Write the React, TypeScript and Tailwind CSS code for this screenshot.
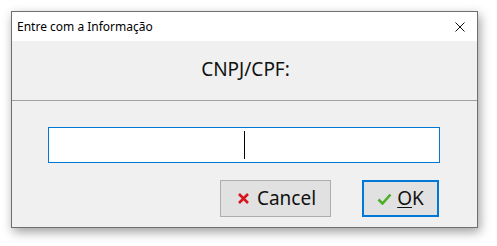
/* "Entre com a Informação" — a Windows-style input dialog asking for CNPJ/CPF */

function CloseIcon() {
  return (
    <svg viewBox="0 0 10 10" className="size-[10px]" fill="none" stroke="#111" strokeWidth="1" aria-hidden="true">
      <path d="M0.5 0.5L9.5 9.5M9.5 0.5L0.5 9.5" />
    </svg>
  );
}

/* bold red cross on the Cancel button */
function CrossIcon() {
  return (
    <svg viewBox="0 0 13 11" className="h-[11px] w-[13px]" fill="none" stroke="#d9141b" strokeWidth="2.6" aria-hidden="true">
      <path d="M2 1L11 10M11 1L2 10" />
    </svg>
  );
}

/* green tick on the OK button */
function CheckIcon() {
  return (
    <svg viewBox="0 0 15 12" className="h-[12px] w-[15px]" fill="none" stroke="#4caf28" strokeWidth="2.6" aria-hidden="true">
      <path d="M1.5 6.5L5.5 10.5L13.5 1.5" />
    </svg>
  );
}

export default function App() {
  return (
    <div className="h-[246px] w-[497px] bg-white pl-[11px] pt-[11px] font-['Noto_Sans',sans-serif]">
      <div className="flex h-[217px] w-[467px] flex-col border border-[#6f6f6f] bg-[#f0f0f0] shadow-[2px_4px_10px_rgba(0,0,0,0.38)]">
        {/* title bar */}
        <div className="flex h-[29px] items-center justify-between bg-white pl-[5px] pr-[12px]">
          <span className="text-[12px] text-black">Entre com a Informação</span>
          <CloseIcon />
        </div>
        {/* label panel */}
        <div className="flex h-[60px] items-center justify-center border-b border-[#a0a0a0] pb-[2px] pl-[2px]">
          <span className="text-[19px] text-[#111]">CNPJ/CPF:</span>
        </div>
        {/* input */}
        <div className="ml-[36px] mt-[26px] flex h-[36px] w-[392px] items-center justify-center border border-[#0078d7] bg-white">
          <span className="h-[28px] w-px bg-black" />
        </div>
        {/* buttons */}
        <div className="ml-[208px] mt-[17px] flex gap-[31px]">
          <button className="flex h-[37px] w-[111px] items-center justify-center gap-[7px] border border-[#adadad] bg-[#e1e1e1] pl-[2px] text-[19px] text-[#111]">
            <CrossIcon />
            Cancel
          </button>
          <button className="flex h-[37px] w-[77px] items-center justify-center gap-[5px] border-2 border-[#0078d7] bg-[#e1e1e1] text-[19px] text-[#111]">
            <CheckIcon />
            <span>
              <span className="underline underline-offset-2">O</span>K
            </span>
          </button>
        </div>
      </div>
    </div>
  );
}
